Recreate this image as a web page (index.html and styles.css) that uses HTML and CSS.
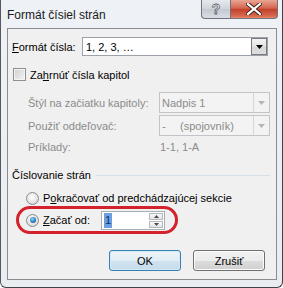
FILE: index.html
```html
<!DOCTYPE html>
<html>
<head>
<meta charset="utf-8">
<link rel="stylesheet" href="styles.css">
</head>
<body>
<div class="window">
  <div class="titlebar">
    <div class="title">Formát čísiel strán</div>
    <div class="caption-btns">
      <div class="cbtn help"><span class="help-glyph">?</span></div>
      <div class="cbtn close">
        <svg width="16" height="12" viewBox="0 0 16 12"><path d="M2 1 L14 11 M14 1 L2 11" stroke="#3b1e1a" stroke-width="4" stroke-linecap="square"/><path d="M2 1 L14 11 M14 1 L2 11" stroke="#ffffff" stroke-width="2.2" stroke-linecap="square"/></svg>
      </div>
    </div>
  </div>
  <div class="client">
    <div class="fmt-row">
      <span class="fmt-label"><u>F</u>ormát čísla:</span>
      <div class="combo">
        <span class="combo-text">1, 2, 3, …</span>
        <span class="drop"><svg width="7" height="4" viewBox="0 0 7 4"><path d="M0 0 H7 L3.5 4 Z" fill="#000"/></svg></span>
      </div>
    </div>
    <div class="check-row">
      <span class="checkbox"></span>
      <span>Za<u>h</u>rnúť čísla kapitol</span>
    </div>
    <div class="chap-grid">
      <span class="dis">Štýl na začiatku kapitoly:</span>
      <div class="combo disabled">
        <span class="combo-text">Nadpis 1</span>
        <span class="drop"><svg width="7" height="4" viewBox="0 0 7 4"><path d="M0 0 H7 L3.5 4 Z" fill="#b4b4b4"/></svg></span>
      </div>
      <span class="dis">Použiť oddeľovač:</span>
      <div class="combo disabled">
        <span class="combo-text"><span class="dash">-</span>(spojovník)</span>
        <span class="drop"><svg width="7" height="4" viewBox="0 0 7 4"><path d="M0 0 H7 L3.5 4 Z" fill="#b4b4b4"/></svg></span>
      </div>
      <span class="dis">Príklady:</span>
      <span class="dis example">1-1, 1-A</span>
    </div>
    <div class="group-head">
      <span>Číslovanie strán</span>
      <span class="sep"></span>
    </div>
    <div class="radio-row">
      <span class="radio"></span>
      <span>P<u>o</u>kračovať od predchádzajúcej sekcie</span>
    </div>
    <div class="ring-row">
      <span class="radio on"></span>
      <span class="start-label"><u>Z</u>ačať od:</span>
      <div class="spin">
        <span class="spin-text"><span class="sel">1</span></span>
        <span class="spin-btns">
          <span class="sbtn"><svg width="5" height="3" viewBox="0 0 5 3"><path d="M0 3 H5 L2.5 0 Z" fill="#4a4a4a"/></svg></span>
          <span class="sbtn"><svg width="5" height="3" viewBox="0 0 5 3"><path d="M0 0 H5 L2.5 3 Z" fill="#4a4a4a"/></svg></span>
        </span>
      </div>
    </div>
    <div class="buttons">
      <div class="btn default">OK</div>
      <div class="btn">Zrušiť</div>
    </div>
  </div>
</div>
</body>
</html>
```
FILE: styles.css
```css
* { box-sizing: border-box; }
html, body { margin: 0; padding: 0; }
body {
  width: 283px;
  height: 288px;
  overflow: hidden;
  background: #ffffff;
  font-family: "Liberation Sans", Arial, sans-serif;
  font-size: 11px;
  color: #000;
}
u { text-decoration: underline; text-underline-offset: 1px; }

.window {
  width: 283px;
  height: 288px;
  background: linear-gradient(#eef1f5, #e9edf2);
  border-left: 1px solid #55595e;
  border-right: 1px solid #3f4348;
  border-bottom: 1px solid #3f4348;
  border-radius: 0 0 6px 6px;
  display: flex;
  flex-direction: column;
}

.titlebar {
  height: 28px;
  display: flex;
  justify-content: space-between;
  align-items: flex-start;
  flex-shrink: 0;
}
.title {
  font-size: 12px;
  padding: 8px 0 0 6px;
  color: #1a1a1a;
}
.caption-btns {
  display: flex;
  margin-right: 4px;
}
.cbtn {
  height: 19px;
  display: flex;
  align-items: center;
  justify-content: center;
  border: 1px solid #6d7480;
  border-top: none;
}
.help {
  width: 29px;
  border-radius: 0 0 0 4px;
  border-right: none;
  background: linear-gradient(#e6e9ee, #cfd4db 50%, #c3c9d1 51%, #d9dde3);
}
.help-glyph {
  font-size: 14px;
  font-weight: bold;
  color: #f4f6f8;
  -webkit-text-stroke: 0.8px #5d6470;
  line-height: 1;
}
.close {
  width: 48px;
  border-radius: 0 0 4px 0;
  background: linear-gradient(#e9a592, #d4664f 45%, #c3412b 52%, #d86a4f 90%, #e98b6d);
}

.client {
  margin: 0 5px 0 6px;
  height: 252px;
  border: 1px solid #898c91;
  background: #f0f0f0;
  padding: 8px 4px 0 4px;
  display: flex;
  flex-direction: column;
}

.fmt-row {
  display: flex;
  align-items: center;
  height: 19px;
}
.fmt-label { width: 70px; }
.combo {
  flex: 1;
  height: 100%;
  display: flex;
  align-items: center;
  background: #fff;
  border: 1px solid #9da2aa;
}
.combo-text { flex: 1; padding-left: 3px; white-space: pre; }
.drop {
  width: 16px;
  height: 100%;
  display: flex;
  align-items: center;
  justify-content: center;
  border: 1px solid #777b80;
  background: linear-gradient(#f3f3f3, #e4e4e4 50%, #d6d6d6 51%, #e0e0e0);
}
.fmt-row .combo { margin-right: 4px; }

.check-row {
  margin-top: 12px;
  margin-left: 1px;
  height: 13px;
  display: flex;
  align-items: center;
  gap: 4px;
}
.checkbox {
  width: 13px;
  height: 13px;
  border: 1px solid #8f8f8f;
  background: linear-gradient(135deg, #cfcfcf, #f4f4f4);
  box-shadow: inset 0 0 0 1px #f4f4f4;
}

.chap-grid {
  margin-top: 11px;
  padding-left: 16px;
  display: grid;
  grid-template-columns: 131px 111px;
  grid-template-rows: 21px 21px 18px;
  row-gap: 2px;
  align-items: center;
}
.dis { color: #8b8b8b; }
.combo.disabled {
  background: #f3f3f3;
  border-color: #c2c4c7;
  color: #8b8b8b;
}
.combo.disabled .combo-text { padding-left: 2px; }
.combo.disabled .drop {
  border: none;
  border-left: 1px solid #d6d6d6;
  background: transparent;
  width: 16px;
}
.dash { display: inline-block; width: 18px; }
.example { padding-left: 1px; }

.group-head {
  margin-top: 12px;
  height: 14px;
  display: flex;
  align-items: center;
  gap: 5px;
}
.sep {
  flex: 1;
  height: 1px;
  background: #d5dfe5;
  margin-right: 2px;
}

.radio-row {
  margin-top: 9px;
  margin-left: 14px;
  height: 14px;
  display: flex;
  align-items: center;
  gap: 4px;
}
.radio {
  width: 13px;
  height: 13px;
  border-radius: 50%;
  border: 1px solid #8a8c8e;
  background: radial-gradient(circle at 45% 40%, #ffffff 0, #f0f0f0 35%, #cfcfcf 90%);
  display: flex;
  align-items: center;
  justify-content: center;
  flex-shrink: 0;
}
.radio.on::after {
  content: "";
  width: 6px;
  height: 6px;
  border-radius: 50%;
  background: radial-gradient(circle at 40% 35%, #8fd3ff 0, #2a7fc4 55%, #123d66 100%);
}

.ring-row {
  margin-top: 1px;
  margin-left: 4px;
  width: 162px;
  height: 28px;
  border: 3px solid #d3222b;
  border-radius: 14px;
  padding-left: 7px;
  display: flex;
  align-items: center;
}
.start-label { width: 62px; padding-left: 4px; }
.spin {
  width: 64px;
  height: 19px;
  display: flex;
  background: #fff;
  border: 1px solid #a9aeb5;
}
.spin-text { flex: 1; display: flex; align-items: center; padding-left: 2px; }
.sel { background: #6c9fe0; color: #0b2f66; padding: 1px 1px; line-height: 13px; }
.spin-btns {
  width: 15px;
  display: flex;
  flex-direction: column;
  gap: 1px;
  padding: 1px 1px 1px 0;
}
.sbtn {
  flex: 1;
  display: flex;
  align-items: center;
  justify-content: center;
  border: 1px solid #b5b9be;
  background: linear-gradient(#f8f8f8, #e3e3e3);
}

.buttons {
  margin-top: 16px;
  display: flex;
  justify-content: flex-end;
  gap: 12px;
  padding-right: 7px;
}
.btn {
  width: 72px;
  height: 21px;
  display: flex;
  align-items: center;
  justify-content: center;
  border: 1px solid #707070;
  border-radius: 3px;
  background: linear-gradient(#f2f2f2, #ebebeb 50%, #dddddd 51%, #cfcfcf);
  box-shadow: inset 0 0 0 1px #fbfbfb;
}
.btn.default {
  border-color: #3c7fb1;
  background: linear-gradient(#eef5fa, #e2edf5 50%, #d2e3ef 51%, #c6dbea);
  box-shadow: inset 0 0 0 1px #cfeaf8;
}
```
